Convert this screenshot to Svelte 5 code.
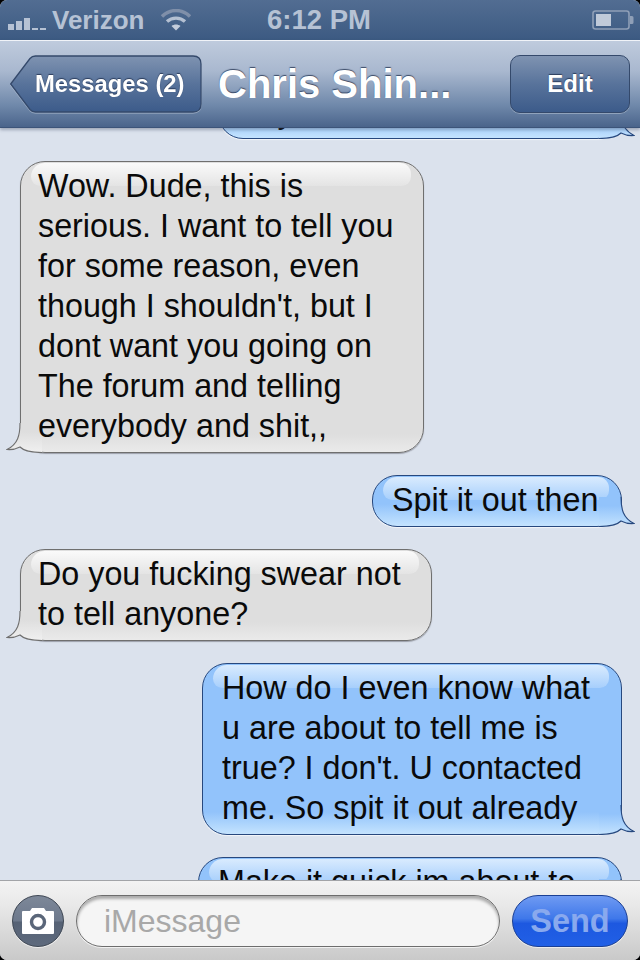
<script>
  const messages = [
    { from: 'me', lines: ['Say'], width: 404 },
    {
      from: 'them',
      lines: [
        'Wow. Dude, this is',
        'serious. I want to tell you',
        'for some reason, even',
        "though I shouldn't, but I",
        'dont want you going on',
        'The forum and telling',
        'everybody and shit,,'
      ],
      width: 404
    },
    { from: 'me', lines: ['Spit it out then'], width: 250 },
    { from: 'them', lines: ['Do you fucking swear not', 'to tell anyone?'], width: 412 },
    {
      from: 'me',
      lines: [
        'How do I even know what',
        'u are about to tell me is',
        "true? I don't. U contacted",
        'me. So spit it out already'
      ],
      width: 420
    },
    { from: 'me', lines: ['Make it quick im about to'], width: 424 }
  ];
</script>

<div class="screen">
  <header class="status">
    <div class="carrier">
      <svg class="bars" width="38" height="14" viewBox="0 0 38 14">
        <rect x="0" y="8" width="6" height="6" />
        <rect x="8" y="5" width="6" height="9" />
        <rect x="16" y="2" width="6" height="12" />
        <rect x="24" y="12" width="6" height="2" />
        <rect x="32" y="12" width="6" height="2" />
      </svg>
      <span>Verizon</span>
      <svg class="wifi" width="30" height="22" viewBox="0 0 30 22" fill="none">
        <path d="M1 7.500C9 -0.500 21 -0.500 29 7.500" stroke="#7f8fa9" stroke-width="3.400" />
        <path d="M6 12.500C11 8 19 8 24 12.500" stroke="#b4c0d2" stroke-width="3.400" />
        <path d="M10.500 17C13 15 17 15 19.500 17L15 21.500Z" fill="#c3cddc" />
      </svg>
    </div>
    <div class="clock">6:12 PM</div>
    <svg class="battery" width="42" height="20" viewBox="0 0 42 20">
      <rect x="1" y="1" width="36" height="18" rx="2.500" fill="none" stroke="#8f9fb7" stroke-width="1.600" />
      <rect x="4" y="4" width="15" height="12" fill="#c0cad9" />
      <path d="M38 6h2a1.500 1.500 0 0 1 1.500 1.500v5a1.500 1.500 0 0 1-1.500 1.500h-2z" fill="#8f9fb7" />
    </svg>
  </header>

  <nav class="nav">
    <button class="back">
      <svg class="back-shape" width="192" height="58" viewBox="0 0 192 58">
        <defs>
          <linearGradient id="navbtn" x1="0" y1="0" x2="0" y2="1">
            <stop offset="0" stop-color="#7f93b1" />
            <stop offset="0.5" stop-color="#58739b" />
            <stop offset="1" stop-color="#3c5b8a" />
          </linearGradient>
        </defs>
        <path
          d="M0.700 29L20 3.500Q22 1 25.500 1H183Q191 1 191 9V49Q191 57 183 57H25.500Q22 57 20 54.500Z"
          fill="url(#navbtn)"
          stroke="#34496b"
          stroke-width="1.300"
        />
      </svg>
      <span>Messages (2)</span>
    </button>
    <h1>Chris Shin...</h1>
    <button class="edit">Edit</button>
  </nav>

  <main class="thread">
    <div class="scroll">
      {#each messages as msg, i}
        <div class="bubble {msg.from}" style:width="{msg.width}px">
          {#each msg.lines as line}
            <div class="line">{line}</div>
          {/each}
          {#if msg.from === 'me'}
            <svg class="tail" width="36" height="30" viewBox="0 0 36 30">
              <defs>
                <linearGradient id="tail-me-{i}" x1="0" y1="0" x2="0" y2="1">
                  <stop offset="0.3" stop-color="#92c3fb" />
                  <stop offset="1" stop-color="#c4e3fe" />
                </linearGradient>
              </defs>
              <path
                d="M22 0C22 12 24 21 35 26.500C30 27 26 26 22 24C18 28 12 29.500 0 29.500L0 0Z"
                fill="url(#tail-me-{i})"
              />
              <path
                d="M22 0C22 12 24 21 35 26.500C30 27 26 26 22 24C18 28 12 29.500 0 29.500"
                fill="none"
                stroke="#27487e"
                stroke-width="1.100"
              />
            </svg>
          {:else}
            <svg class="tail" width="36" height="30" viewBox="0 0 36 30">
              <defs>
                <linearGradient id="tail-them-{i}" x1="0" y1="0" x2="0" y2="1">
                  <stop offset="0.3" stop-color="#dedede" />
                  <stop offset="1" stop-color="#f0f0f0" />
                </linearGradient>
              </defs>
              <path
                d="M14 0C14 12 12 21 1 26.500C6 27 10 26 14 24C18 28 24 29.500 36 29.500L36 0Z"
                fill="url(#tail-them-{i})"
              />
              <path
                d="M14 0C14 12 12 21 1 26.500C6 27 10 26 14 24C18 28 24 29.500 36 29.500"
                fill="none"
                stroke="#6f6f6f"
                stroke-width="1.100"
              />
            </svg>
          {/if}
        </div>
      {/each}
    </div>
  </main>

  <footer class="composer">
    <button class="camera" aria-label="Camera">
      <svg width="34" height="28" viewBox="0 0 34 28">
        <path
          d="M2 4H9L11 1H23L25 4H32Q33 4 33 5V26Q33 27 32 27H2Q1 27 1 26V5Q1 4 2 4Z"
          fill="#fff"
        />
        <circle cx="17" cy="15" r="6.500" fill="none" stroke="#5a6679" stroke-width="3.400" />
      </svg>
    </button>
    <div class="field">iMessage</div>
    <button class="send">Send</button>
  </footer>
</div>

<style>
  :global(body) {
    background: #000;
  }

  .screen {
    width: 640px;
    height: 960px;
    display: flex;
    flex-direction: column;
    overflow: hidden;
    border-radius: 7px;
    background: #dbe2ed;
    font-family: 'Liberation Sans', Arial, sans-serif;
  }

  button {
    font-family: inherit;
    padding: 0;
    cursor: pointer;
  }

  .status {
    height: 40px;
    flex: none;
    display: grid;
    grid-template-columns: 1fr auto 1fr;
    align-items: center;
    padding: 0 6px 0 8px;
    box-sizing: border-box;
    background: linear-gradient(#526d92, #3c5a82);
    color: #b6c2d4;
    font-size: 26px;
    font-weight: bold;
  }

  .carrier {
    display: flex;
    align-items: center;
    gap: 6px;
  }

  .bars {
    fill: #b6c2d4;
    margin-top: 5px;
  }

  .wifi {
    margin-left: 11px;
  }

  .clock {
    font-size: 27.500px;
    padding-right: 4px;
  }

  .battery {
    justify-self: end;
  }

  .nav {
    height: 88px;
    flex: none;
    position: relative;
    z-index: 2;
    display: flex;
    align-items: center;
    padding: 0 10px;
    box-sizing: border-box;
    border-top: 1px solid #f0f3f8;
    border-bottom: 1px solid #3c5479;
    background: linear-gradient(#bfcbdd, #a9b8cf 35%, #6f88aa 75%, #4a648b);
    box-shadow: 0 2px 3px rgba(50, 60, 90, 0.35);
    color: #fff;
  }

  .back {
    position: relative;
    width: 192px;
    height: 58px;
    flex: none;
    border: 0;
    background: none;
    color: #fff;
    font-size: 23.800px;
    font-weight: bold;
    text-shadow: 0 -1px 1px rgba(30, 45, 75, 0.8);
    filter: drop-shadow(0 1px 0 rgba(255, 255, 255, 0.3));
  }

  .back-shape {
    position: absolute;
    left: 0;
    top: 0;
  }

  .back span {
    position: relative;
    display: block;
    padding-left: 25px;
    text-align: left;
  }

  h1 {
    margin: 0 0 0 16px;
    flex: 1;
    font-size: 40px;
    font-weight: bold;
    white-space: nowrap;
    text-shadow: 0 -1px 1px rgba(40, 55, 85, 0.85);
  }

  .edit {
    width: 120px;
    height: 58px;
    flex: none;
    border: 1.300px solid #34496b;
    border-radius: 10px;
    background: linear-gradient(#7f93b1, #58739b 50%, #3c5b8a);
    box-shadow: 0 1px 0 rgba(255, 255, 255, 0.3);
    color: #fff;
    font-size: 24px;
    font-weight: bold;
    text-shadow: 0 -1px 1px rgba(30, 45, 75, 0.8);
  }

  .thread {
    flex: 1;
    min-height: 0;
    overflow: hidden;
    background: #dbe2ed;
  }

  .scroll {
    margin-top: -41px;
    padding: 0 18px 0 20px;
    display: flex;
    flex-direction: column;
    gap: 22px;
  }

  .bubble {
    position: relative;
    box-sizing: border-box;
    padding: 4px 0 6px 19px;
    border-radius: 25px;
    border: 1px solid;
    font-size: 32.300px;
    line-height: 40px;
    color: #0a0a0a;
    white-space: nowrap;
  }

  .bubble::before {
    content: '';
    position: absolute;
    top: 1px;
    left: 10px;
    right: 12px;
    height: 23px;
    border-radius: 18px 14px 12px 12px;
  }

  .line {
    position: relative;
    z-index: 1;
  }

  .bubble.me {
    align-self: flex-end;
    border-color: #27487e;
    background: linear-gradient(#92c3fb calc(100% - 22px), #c4e3fe);
    box-shadow: 0 1px 1px rgba(255, 255, 255, 0.7);
  }

  .bubble.me::before {
    background: linear-gradient(#d9ebfe, #a7cffc);
  }

  .bubble.them {
    align-self: flex-start;
    padding-left: 17px;
    border-color: #6f6f6f;
    background: linear-gradient(#dedede calc(100% - 18px), #eaeaea);
    box-shadow: 0 1px 1px rgba(60, 60, 70, 0.4);
  }

  .bubble.them::before {
    background: linear-gradient(#fafafa, #e4e4e4);
  }

  .tail {
    position: absolute;
    bottom: -1px;
  }

  .me .tail {
    right: -14px;
  }

  .them .tail {
    left: -15px;
  }

  .composer {
    height: 80px;
    flex: none;
    position: relative;
    z-index: 2;
    display: flex;
    align-items: center;
    gap: 12px;
    padding: 0 12px;
    box-sizing: border-box;
    border-top: 1px solid #a2a4a8;
    background: linear-gradient(#f3f3f3, #e9e9e9 30%, #c9c9c9);
  }

  .camera {
    width: 52px;
    height: 52px;
    flex: none;
    display: flex;
    align-items: center;
    justify-content: center;
    border: 1.500px solid #3d4653;
    border-radius: 50%;
    background: linear-gradient(#7d8899, #6d798c 50%, #566275 52%, #5e6a7d);
    box-shadow: 0 1px 0 rgba(255, 255, 255, 0.6);
  }

  .field {
    flex: 1;
    height: 52px;
    box-sizing: border-box;
    padding-left: 27px;
    border: 1.500px solid #6d6d6d;
    border-radius: 26px;
    background: #f5f5f5;
    box-shadow: inset 0 3px 3px rgba(0, 0, 0, 0.3), 0 1px 0 rgba(255, 255, 255, 0.7);
    color: #a8a8a8;
    font-size: 32px;
    line-height: 50px;
  }

  .send {
    width: 116px;
    height: 52px;
    flex: none;
    padding-top: 2px;
    border: 1px solid #1a3f94;
    border-radius: 26px;
    background: linear-gradient(#6f9af2, #3f78ea 45%, #1d58e0 55%, #2160e6);
    box-shadow: 0 1px 0 rgba(255, 255, 255, 0.6);
    color: #89a9ee;
    font-size: 32.500px;
    font-weight: bold;
  }
</style>
